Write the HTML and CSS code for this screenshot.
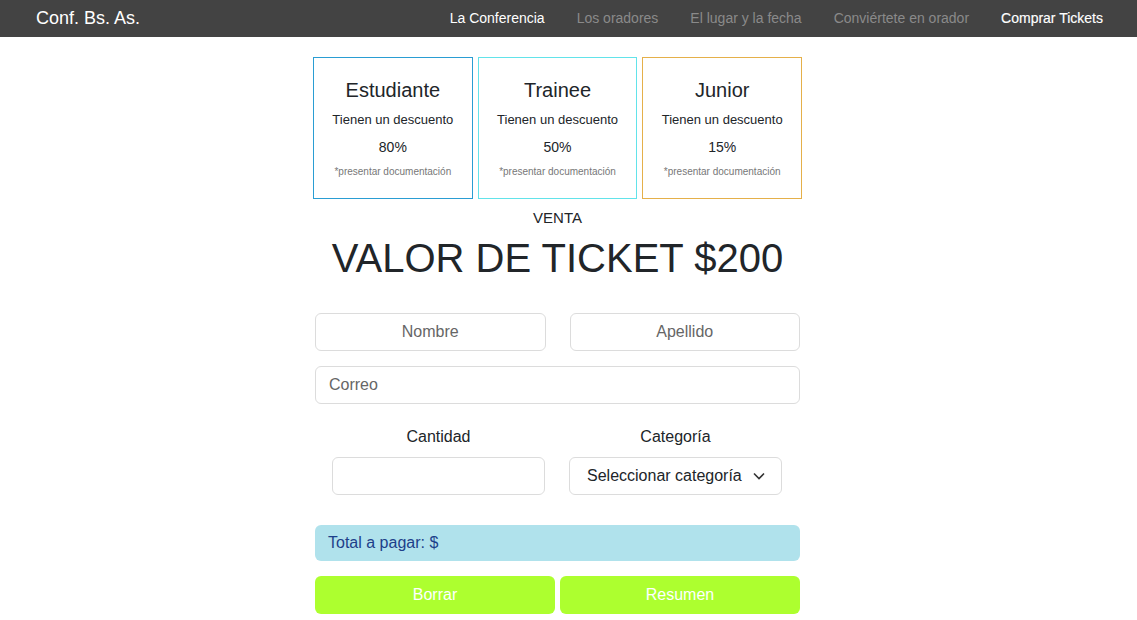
FILE: index.html
```html
<!DOCTYPE html>
<html lang="es">
<head>
<meta charset="utf-8">
<title>Conf. Bs. As.</title>
<link rel="stylesheet" href="styles.css">
</head>
<body>
<header class="navbar">
  <a class="brand" href="#">Conf. Bs. As.</a>
  <nav class="nav">
    <a class="nav-link active" href="#">La Conferencia</a>
    <a class="nav-link" href="#">Los oradores</a>
    <a class="nav-link" href="#">El lugar y la fecha</a>
    <a class="nav-link" href="#">Conviértete en orador</a>
    <a class="nav-link current" href="#">Comprar Tickets</a>
  </nav>
</header>
<main class="main">
  <div class="wrap">
    <section class="cards">
      <div class="card card-blue">
        <h3 class="card-title">Estudiante</h3>
        <p class="card-text">Tienen un descuento</p>
        <p class="card-pct">80%</p>
        <p class="card-note">*presentar documentación</p>
      </div>
      <div class="card card-cyan">
        <h3 class="card-title">Trainee</h3>
        <p class="card-text">Tienen un descuento</p>
        <p class="card-pct">50%</p>
        <p class="card-note">*presentar documentación</p>
      </div>
      <div class="card card-orange">
        <h3 class="card-title">Junior</h3>
        <p class="card-text">Tienen un descuento</p>
        <p class="card-pct">15%</p>
        <p class="card-note">*presentar documentación</p>
      </div>
    </section>
    <p class="venta">VENTA</p>
    <h1 class="price">VALOR DE TICKET $200</h1>
    <form class="form">
      <div class="row">
        <input class="field center" type="text" placeholder="Nombre">
        <input class="field center" type="text" placeholder="Apellido">
      </div>
      <input class="field" type="email" placeholder="Correo">
      <div class="row row-inner">
        <div class="group">
          <label class="label">Cantidad</label>
          <input class="field" type="text">
        </div>
        <div class="group">
          <label class="label">Categoría</label>
          <div class="select">
            <span>Seleccionar categoría</span>
            <svg width="12" height="8" viewBox="0 0 12 8"><path d="M1 1.5 L6 6.5 L11 1.5" fill="none" stroke="#333" stroke-width="1.6"/></svg>
          </div>
        </div>
      </div>
      <div class="total">Total a pagar: $</div>
      <div class="buttons">
        <button type="button" class="btn">Borrar</button>
        <button type="button" class="btn">Resumen</button>
      </div>
    </form>
  </div>
</main>
</body>
</html>
```

FILE: styles.css
```css
* { box-sizing: border-box; }
body {
  margin: 0;
  font-family: "Liberation Sans", Arial, sans-serif;
  color: #212529;
  background: #fff;
}
.navbar {
  height: 37px;
  background: #434343;
  display: flex;
  align-items: center;
  justify-content: space-between;
  padding: 0 18px 1px 36px;
}
.brand {
  color: #fff;
  font-size: 18px;
  text-decoration: none;
}
.nav { display: flex; }
.nav-link {
  color: #8a8a8a;
  font-size: 14px;
  text-decoration: none;
  padding: 0 16px;
}
.nav-link.active { color: #fff; }
.nav-link.current { color: #fff; -webkit-text-stroke: 0.15px #fff; }
.main {
  padding-right: 22px;
}
.wrap {
  width: 489px;
  margin: 0 auto;
  padding-top: 20px;
}
.cards {
  display: flex;
  gap: 5px;
}
.card {
  width: 160px;
  height: 142px;
  border: 1.5px solid;
  text-align: center;
  padding-top: 19px;
}
.card-blue { border-color: #2a9dd3; }
.card-cyan { border-color: #62e3ea; }
.card-orange { border-color: #e5b04a; }
.card-title {
  margin: 0;
  font-size: 20px;
  font-weight: normal;
  line-height: 26px;
}
.card-text {
  margin: 9px 0 0;
  font-size: 13px;
  line-height: 16px;
}
.card-pct {
  margin: 10px 0 0;
  font-size: 14px;
  line-height: 18px;
}
.card-note {
  margin: 9px 0 0;
  font-size: 10px;
  color: #777;
  line-height: 14px;
}
.venta {
  margin: 9px 0 0;
  text-align: center;
  font-size: 15px;
  line-height: 20px;
}
.price {
  margin: 6px 0 0;
  text-align: center;
  font-size: 40px;
  font-weight: normal;
  line-height: 48px;
  white-space: nowrap;
}
.form {
  margin-top: 31px;
  padding: 0 2px;
  display: flex;
  flex-direction: column;
}
.row {
  display: flex;
  gap: 24px;
  margin-bottom: 15px;
}
.row > .field { flex: 1; }
.field {
  height: 38px;
  border: 1px solid #dcdcdc;
  border-radius: 6px;
  font-family: inherit;
  font-size: 16px;
  padding: 0 13px;
  color: #212529;
  background: #fff;
  width: 100%;
}
.field::placeholder { color: #666; }
.field.center { text-align: center; }
.row-inner {
  margin-top: 23px;
  gap: 24px;
  padding: 0 18px 0 17px;
  margin-bottom: 30px;
}
.group {
  flex: 1;
  display: flex;
  flex-direction: column;
  align-items: center;
}
.label {
  font-size: 16px;
  line-height: 20px;
  margin-bottom: 10px;
}
.select {
  width: 100%;
  height: 38px;
  border: 1px solid #dcdcdc;
  border-radius: 6px;
  display: flex;
  align-items: center;
  justify-content: space-between;
  padding: 0 16px 0 17px;
  font-size: 16px;
}
.total {
  height: 36px;
  background: #b0e2ec;
  border-radius: 6px;
  color: #1d3f8a;
  font-size: 16px;
  display: flex;
  align-items: center;
  padding-left: 13px;
}
.buttons {
  display: flex;
  gap: 5px;
  margin-top: 15px;
}
.btn {
  flex: 1;
  height: 38px;
  border: none;
  border-radius: 6px;
  background: #adff2f;
  color: #fff;
  font-family: inherit;
  font-size: 16px;
}
```
